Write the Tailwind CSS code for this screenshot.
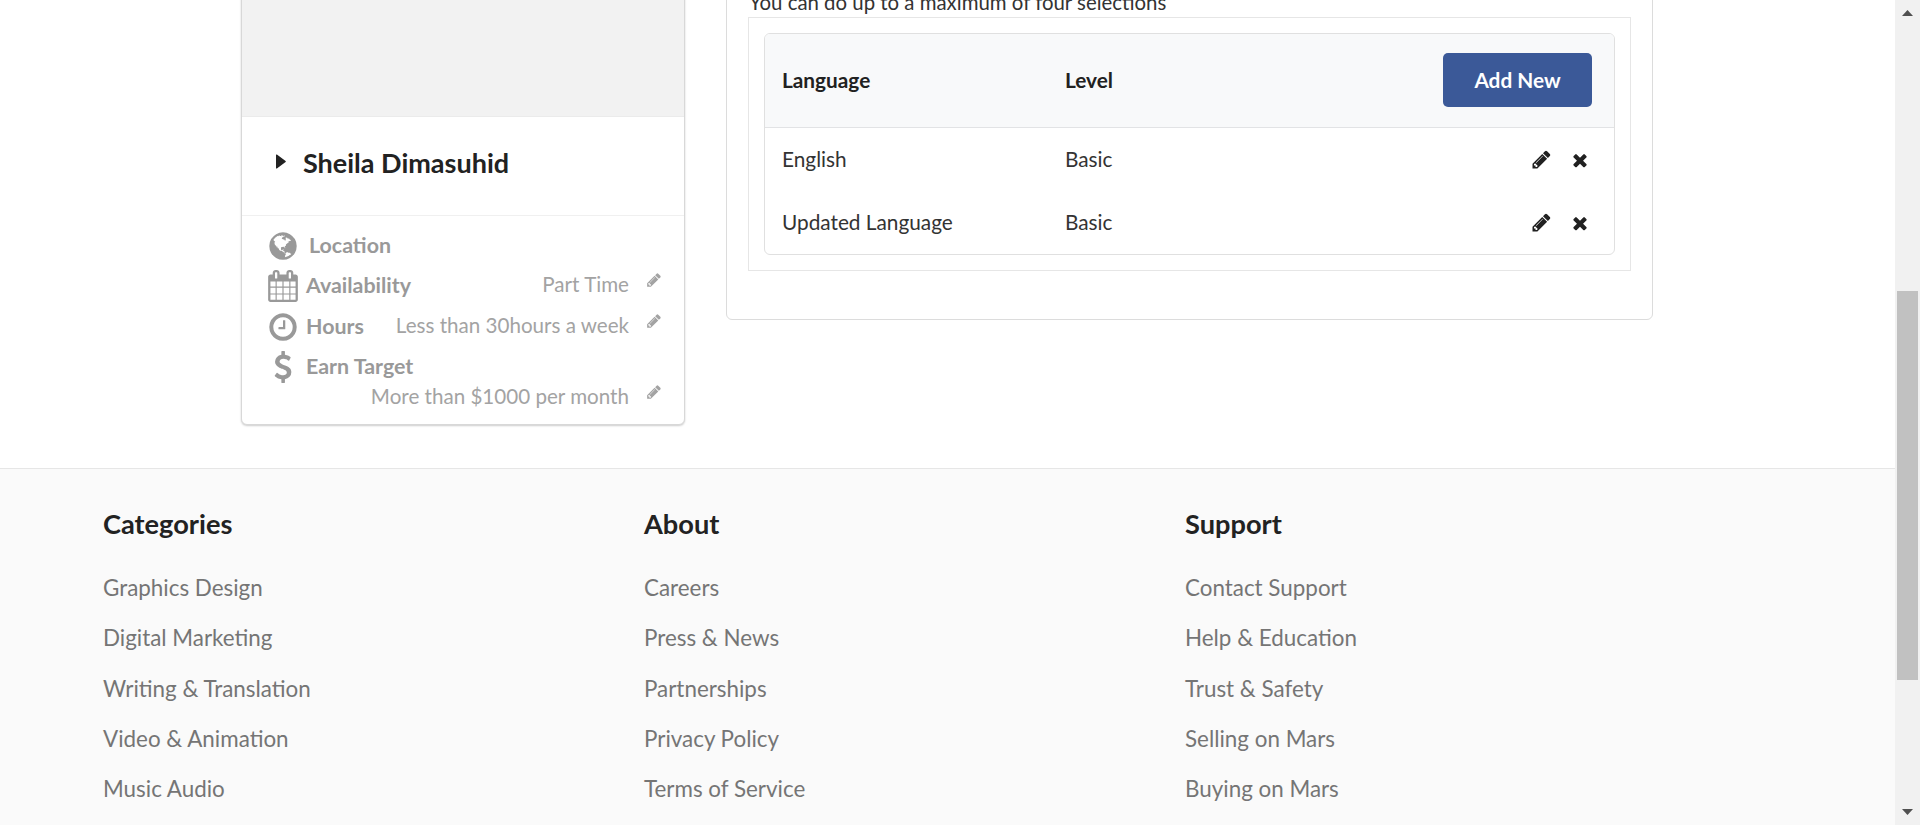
<!DOCTYPE html>
<html lang="en">
<head>
<meta charset="utf-8">
<title>Profile</title>
<script src="https://cdn.jsdelivr.net/npm/@tailwindcss/browser@4"></script>
</head>
<body class="h-[825px] overflow-hidden bg-white font-['Lato',sans-serif]">
<svg class="hidden" aria-hidden="true">
  <symbol id="pencil" viewBox="0 0 1792 1792"><path d="M491 1536l91-91-235-235-91 91v107h128v128h107zm523-928q0-22-22-22-10 0-17 7l-542 542q-7 7-7 17 0 22 22 22 10 0 17-7l542-542q7-7 7-17zm-54-192l416 416-832 832h-416v-416zm683 96q0 53-37 90l-166 166-416-416 166-165q36-38 90-38 53 0 91 38l235 234q37 39 37 91z"/></symbol>
  <symbol id="times" viewBox="0 0 1792 1792"><path d="M1490 1322q0 40-28 68l-136 136q-28 28-68 28t-68-28l-294-294-294 294q-28 28-68 28t-68-28l-136-136q-28-28-28-68t28-68l294-294-294-294q-28-28-28-68t28-68l136-136q28-28 68-28t68 28l294 294 294-294q28-28 68-28t68 28l136 136q28 28 28 68t-28 68l-294 294 294 294q28 28 28 68z"/></symbol>
</svg>
<div class="flex h-[825px]">
  <main class="flex-1 min-w-0 overflow-hidden">
    <section class="h-[468px] flex pl-[241px] border-b border-[#e6e6e6] box-content -mb-px">
      <aside class="w-[444px] h-[465px] -mt-[40px] flex flex-col bg-white border border-[#d8d8d8] rounded-[6px] shadow-[0_1px_2px_rgba(0,0,0,0.2)] overflow-hidden">
        <div class="h-[156px] shrink-0 bg-[#f2f2f2] border-b border-[#ebebeb]"></div>
        <div class="h-[99px] shrink-0 flex items-center pl-[34px] pb-[8px] gap-[17px] border-b border-[#f0f0f0]">
          <svg class="w-[10px] h-[17px] fill-[#222] -mt-[1px]" viewBox="0 0 11 17"><path d="M1 .8 10.2 7.6a1.1 1.1 0 0 1 0 1.8L1 16.2A.7.7 0 0 1 0 15.6V1.4A.7.7 0 0 1 1 .8z"/></svg>
          <h2 class="text-[27px] leading-none font-bold text-[#222]">Sheila Dimasuhid</h2>
        </div>
        <div class="flex-1 pl-[25px] pr-[22px] pt-[16px] text-[#a3a3a3] text-[20.6px]">
          <div class="h-[28px] flex items-center">
            <svg class="w-[32px] h-[32px] shrink-0 fill-[#999]" viewBox="0 0 1792 1792"><path d="M896 128q209 0 385.5 103t279.5 279.5 103 385.5-103 385.5-279.5 279.5-385.5 103-385.5-103-279.5-279.5-103-385.5 103-385.5 279.5-279.5 385.5-103zm274 521q-2 1-9.5 9.5t-13.5 9.5q2 0 4.5-5t5-11 3.5-7q6-7 22-15 14-6 52-12 34-8 51 11-2-2 9.5-13t14.5-12q3-2 15-4.5t15-7.5l2-22q-12 1-17.5-7t-6.5-21q0 2-6 8 0-7-4.5-8t-11.5 1-9 1q-10-3-15-7.5t-8-16.5-4-15q-2-5-9.5-11t-9.5-10q-1-2-2.5-5.5t-3-6.5-4-5.5-5.5-2.5-7 5-7.5 10-4.5 5q-3-2-6-1.5t-4.5 1-4.5 3-5 3.5q-3 2-8.5 3t-8.5 2q15-5-1-11-10-4-16-3 9-4 7.5-12t-8.5-14h5q-1-4-8.5-8.5t-17.5-8.5-13-6q-8-5-34-9.5t-33-.5q-5 6-4.5 10.5t4 14 3.5 12.5q1 6-5.5 13t-6.5 12q0 7 14 15.5t10 21.5q-3 8-16 16t-16 12q-5 8-1.5 18.5t10.5 16.5q2 2 1.5 4t-3.5 4.5-5.5 4-6.5 3.5l-3 2q-11 5-20.5-6t-13.5-26q-7-25-16-30-23-8-29 1-5-13-41-26-25-9-58-4 6-1 0-15-7-15-19-12 3-6 4-17.5t1-13.5q3-13 12-23 1-1 7-8.5t9.5-13.5.5-6q35 4 50-11 5-5 11.5-17t10.5-17q9-6 14-5.5t14.5 5.5 14.5 5q14 1 15.5-11t-7.5-20q12 1 3-17-4-7-8-9-12-4-27 5-8 4 2 8-1-1-9.5 10.5t-16.5 17.5-16-5q-1-1-5.5-13.5t-9.5-13.5q-8 0-16 15 3-8-11-15t-24-8q19-12-8-27-7-4-20.5-5t-19.5 4q-5 7-5.5 11.5t5 8 10.5 5.5 11.5 4 8.5 3q14 10 8 14-2 1-8.5 3.5t-11.5 4.5-6 4q-3 4 0 14t-2 14q-5-5-9-17.5t-7-16.5q7 9-25 6l-10-1q-4 0-16 2t-20.5 1-13.5-8q-4-8 0-20 1-4 4-2-4-3-11-9.5t-10-8.5q-46 15-94 41 6 1 12-1 5-2 13-6.5t10-5.5q34-14 42-7l5-5q14 16 20 25-7-4-30-1-20 6-22 12 7 12 5 18-4-3-11.5-10t-14.5-11-15-5q-16 0-22 1-146 80-235 222 7 7 12 8 4 1 5 9t2.5 11 11.5-3q9 8 3 19 1-1 44 27 19 17 21 21 3 11-10 18-1-2-9-9t-9-4q-3 5 .5 18.5t10.5 12.5q-7 0-9.5 16t-2.5 35.5-1 23.5l2 1q-3 12 5.5 34.5t21.5 19.5q-13 3 20 43 6 8 8 9 3 2 12 7.5t15 10 10 10.5q4 5 10 22.5t14 23.5q-2 6 9.5 20t10.5 23q-1 0-2.5 1t-2.5 1q3 7 15.5 14t15.5 13q1 3 2 10t3 11 8 2q2-20-24-62-15-25-17-29-3-5-5.5-15.5t-4.5-14.5q2 0 6 1.5t8.5 3.5 7.5 4 2 3q-3 7 2 17.5t12 18.5 17 19 12 13q6 6 14 19.5t0 13.5q9 0 20 10.5t17 19.5q5 8 8 26t5 24q2 7 8.5 13.5t12.5 9.5l16 8 13 7q5 2 18.5 10.5t21.5 11.5q10 4 16 4t14.5-2.5 13.5-3.5q15-2 29 15t21 21q36 19 55 11-2 1 .5 7.5t8 15.5 9 14.5 5.5 8.5q5 6 18 15t18 15q6-4 7-9-3 8 7 20t18 10q14-3 14-32-31 15-49-18 0-1-2.5-5.5t-4-8.5-2.5-8.5 0-7.5 5-3q9 0 10-3.5t-2-12.5-4-13q-1-8-11-20t-12-15q-5 9-16 8t-16-9q0 1-1.5 5.5t-1.5 6.5q-13 0-15-1 1-3 2.5-17.5t3.5-22.5q1-4 5.5-12t7.5-14.5 4-12.5-4.5-9.5-17.5-2.5q-19 1-26 20-1 3-3 10.5t-5 11.5-9 7q-7 3-24 2t-24-5q-13-8-22.5-29t-9.5-37q0-10 2.5-26.5t3-25-5.5-24.5q3-2 9-9.5t10-10.5q2-1 4.5-1.5t4.5 0 4-1.5 3-6q-1-1-4-3-3-3-4-3 7 3 28.5-1.5t27.5 1.5q15 11 22-2 0-1-2.5-9.5t-.5-13.5q5 27 29 9 3 3 15.5 5t17.5 5q3 2 7 5.5t5.5 4.5 5-.5 8.5-6.5q10 14 12 24 11 40 19 44 7 3 11 2t4.5-9.5 0-14-1.5-12.5l-1-8v-18l-1-8q-15-3-18.5-12t1.5-18.5 15-18.5q1-1 8.5-3.5t15.5-6.5 12-8q21-19 15-35 7 0 11-9-1 0-5-3t-7.5-5-4.5-2q9-5 2-16 5-3 7.5-11t7.5-10q9 12 21 2 8-8 1-16 5-7 20.5-10.5t18.5-9.5q7 2 8-2t1-12 3-12q4-5 15-9t13-5l17-11q3-4 0-4 18 2 31-11 10-11-6-20 3-6-3-9.5t-15-5.5q3-1 11.5-.5t10.5-1.5q15-10-7-16-17-5-43 12zm-163 877q206-36 351-189-3-3-12.5-4.5t-12.5-3.5q-18-7-24-8 1-7-2.5-13t-8-9-12.5-8-11-7q-2-2-7-6t-7-5.5-7.5-4.5-8.5-2-10 1l-3 1q-3 1-5.5 2.5t-5.5 3-4 3 0 2.5q-21-17-36-22-5-1-11-5.5t-10.5-7-10-1.5-11.5 7q-5 5-6 15t-2 13q-7-5 0-17.5t2-18.5q-3-6-10.5-4.5t-12 4.5-11.5 8.5-9 6.5-8.5 5.5-8.5 7.5q-3 4-6 12t-5 11q-2-4-11.5-6.5t-9.5-5.5q2 10 4 35t5 38q7 31-12 48-27 25-29 40-4 22 12 26 0 7-8 20.5t-7 21.5q0 6 2 16z"/></svg>
            <span class="ml-[10px] mb-[1px] font-bold text-[21.4px] text-[#999]">Location</span>
          </div>
          <div class="h-[40px] mt-[6px] flex items-center">
            <svg class="w-[32px] h-[32px] shrink-0 fill-[#999]" viewBox="0 0 1792 1792"><path d="M192 1664h288v-288h-288v288zm352 0h320v-288h-320v288zm-352-352h288v-320h-288v320zm352 0h320v-320h-320v320zm-352-384h288v-288h-288v288zm736 736h320v-288h-320v288zm-384-736h320v-288h-320v288zm768 736h288v-288h-288v288zm-384-352h320v-320h-320v320zm-352-864v-288q0-13-9.5-22.5t-22.5-9.5h-64q-13 0-22.5 9.5t-9.5 22.5v288q0 13 9.5 22.5t22.5 9.5h64q13 0 22.5-9.5t9.5-22.5zm736 864h288v-320h-288v320zm-384-384h320v-288h-320v288zm384 0h288v-288h-288v288zm32-480v-288q0-13-9.5-22.5t-22.5-9.5h-64q-13 0-22.5 9.5t-9.5 22.5v288q0 13 9.5 22.5t22.5 9.5h64q13 0 22.5-9.5t9.5-22.5zm384-64v1280q0 52-38 90t-90 38h-1408q-52 0-90-38t-38-90v-1280q0-52 38-90t90-38h128v-96q0-66 47-113t113-47h64q66 0 113 47t47 113v96h384v-96q0-66 47-113t113-47h64q66 0 113 47t47 113v96h128q52 0 90 38t38 90z"/></svg>
            <span class="ml-[7px] mb-[2px] font-bold text-[21.4px] text-[#999]">Availability</span>
            <span class="ml-auto mb-[3px]">Part Time</span>
            <svg class="w-[16px] h-[16px] ml-[17px] -mt-[12px] fill-[#a3a3a3]"><use href="#pencil"/></svg>
          </div>
          <div class="h-[40px] mt-px flex items-center">
            <svg class="w-[32px] h-[32px] shrink-0 fill-[#999]" viewBox="0 0 1792 1792"><path d="M1024 544v448q0 14-9 23t-23 9h-320q-14 0-23-9t-9-23v-64q0-14 9-23t23-9h224v-352q0-14 9-23t23-9h64q14 0 23 9t9 23zm416 352q0-148-73-273t-198-198-273-73-273 73-198 198-73 273 73 273 198 198 273 73 273-73 198-198 73-273zm224 0q0 209-103 385.5t-279.5 279.5-385.5 103-385.5-103-279.5-279.5-103-385.5 103-385.5 279.5-279.5 385.5-103 385.5 103 279.5 279.5 103 385.5z"/></svg>
            <span class="ml-[7px] mb-[2px] font-bold text-[21.4px] text-[#999]">Hours</span>
            <span class="ml-auto mb-[3px]">Less than 30hours a week</span>
            <svg class="w-[16px] h-[16px] ml-[17px] -mt-[12px] fill-[#a3a3a3]"><use href="#pencil"/></svg>
          </div>
          <div class="h-[40px] flex items-center">
            <svg class="w-[32px] h-[32px] shrink-0 fill-[#999]" viewBox="0 0 1792 1792"><path d="M1362 1185q0 153-99.5 263.5t-258.5 136.5v175q0 14-9 23t-23 9h-135q-13 0-22.5-9.5t-9.5-22.5v-175q-66-9-127.5-31t-101.5-44.5-74-48-46.5-37.5-17.5-18q-17-21-2-41l103-135q7-10 23-12 15-2 24 9l2 2q113 99 243 125 37 8 74 8 81 0 142.5-43t61.5-122q0-28-15-53t-33.5-42-58.5-37.5-66-32-80-32.5q-39-16-61.5-25t-61.5-26.5-62.5-31-56.5-35.5-53.5-42.5-43.5-49-35.5-58-21-66.5-8.5-78q0-138 98-242t255-134v-180q0-13 9.5-22.5t22.5-9.5h135q14 0 23 9t9 23v176q57 6 110.5 23t87 33.5 63.5 37.5 39 29 15 14q17 18 5 38l-81 146q-8 15-23 16-14 3-27-7-3-3-14.5-12t-39-26.5-58.5-32-74.5-26-85.5-11.5q-95 0-155 43t-60 111q0 26 8.5 48t29.5 41.5 39.5 33 56 31 60.5 27 70 27.5q53 20 81 31.5t76 35 75.5 42.5 62 50 53 63.5 31.5 76.5 13 94z"/></svg>
            <span class="ml-[7px] mb-[2px] font-bold text-[21.4px] text-[#999]">Earn Target</span>
          </div>
          <div class="h-[32px] -mt-[6px] flex items-center justify-end">
            <span class="mb-[1px]">More than $1000 per month</span>
            <svg class="w-[16px] h-[16px] ml-[17px] -mt-[11px] fill-[#a3a3a3]"><use href="#pencil"/></svg>
          </div>
        </div>
      </aside>
      <div class="w-[927px] h-[360px] -mt-[40px] ml-[41px] px-[21px] bg-white border border-[#dcdcdc] rounded-[6px] flex flex-col">
        <p class="mt-[28px] h-[28px] leading-[27px] text-[20.4px] text-[#333] pl-[1px]">You can do up to a maximum of four selections</p>
        <div class="h-[254px] border border-[#e6e6e6] p-[15px]">
          <div class="h-[222px] border border-[#e0e0e0] rounded-[6px] overflow-hidden text-[20.8px] text-[#333]">
            <div class="h-[94px] pb-px bg-[#f8f9fa] border-b border-[#e2e3e5] flex items-center pl-[17px] pr-[22px] font-bold text-[#212121]">
              <span class="w-[283px]">Language</span>
              <span>Level</span>
              <button class="ml-auto w-[149px] h-[54px] rounded-[5px] bg-[#3b5998] text-white text-[20.8px] font-bold">Add New</button>
            </div>
            <div class="h-[63px] flex items-center pl-[17px] pr-[24px]">
              <span class="w-[283px] mb-[2px]">English</span>
              <span class="mb-[2px]">Basic</span>
              <svg class="w-[21px] h-[21px] ml-auto fill-[#212121]"><use href="#pencil"/></svg>
              <svg class="w-[20px] h-[20px] ml-[18px] fill-[#212121]"><use href="#times"/></svg>
            </div>
            <div class="h-[63px] flex items-center pl-[17px] pr-[24px]">
              <span class="w-[283px] mb-[2px]">Updated Language</span>
              <span class="mb-[2px]">Basic</span>
              <svg class="w-[21px] h-[21px] ml-auto fill-[#212121]"><use href="#pencil"/></svg>
              <svg class="w-[20px] h-[20px] ml-[18px] fill-[#212121]"><use href="#times"/></svg>
            </div>
          </div>
        </div>
      </div>
    </section>
    <footer class="h-[357px] bg-[#fafafa] border-t border-[#e6e6e6] pl-[103px] pt-[40px] grid grid-cols-[541px_541px_1fr]">
      <div>
        <h3 class="text-[27.2px] leading-[30px] font-bold text-[#222] mb-[24px]">Categories</h3>
        <ul class="text-[22.4px] text-[#757575]">
          <li class="h-[50.2px] flex items-center">Graphics Design</li>
          <li class="h-[50.2px] flex items-center">Digital Marketing</li>
          <li class="h-[50.2px] flex items-center">Writing &amp; Translation</li>
          <li class="h-[50.2px] flex items-center">Video &amp; Animation</li>
          <li class="h-[50.2px] flex items-center">Music Audio</li>
        </ul>
      </div>
      <div>
        <h3 class="text-[27.2px] leading-[30px] font-bold text-[#222] mb-[24px]">About</h3>
        <ul class="text-[22.4px] text-[#757575]">
          <li class="h-[50.2px] flex items-center">Careers</li>
          <li class="h-[50.2px] flex items-center">Press &amp; News</li>
          <li class="h-[50.2px] flex items-center">Partnerships</li>
          <li class="h-[50.2px] flex items-center">Privacy Policy</li>
          <li class="h-[50.2px] flex items-center">Terms of Service</li>
        </ul>
      </div>
      <div>
        <h3 class="text-[27.2px] leading-[30px] font-bold text-[#222] mb-[24px]">Support</h3>
        <ul class="text-[22.4px] text-[#757575]">
          <li class="h-[50.2px] flex items-center">Contact Support</li>
          <li class="h-[50.2px] flex items-center">Help &amp; Education</li>
          <li class="h-[50.2px] flex items-center">Trust &amp; Safety</li>
          <li class="h-[50.2px] flex items-center">Selling on Mars</li>
          <li class="h-[50.2px] flex items-center">Buying on Mars</li>
        </ul>
      </div>
    </footer>
  </main>
  <div class="w-[25px] shrink-0 bg-[#f1f1f1] flex flex-col items-center justify-between py-[10px] relative">
    <svg class="w-[11px] h-[6px] fill-[#505050]" viewBox="0 0 11 6"><path d="M5.5 0 11 6H0z"/></svg>
    <div class="absolute left-[2px] top-[291px] w-[21px] h-[389px] bg-[#c1c1c1]"></div>
    <svg class="w-[11px] h-[6px] fill-[#505050]" viewBox="0 0 11 6"><path d="M0 0h11L5.5 6z"/></svg>
  </div>
</div>
</body>
</html>
